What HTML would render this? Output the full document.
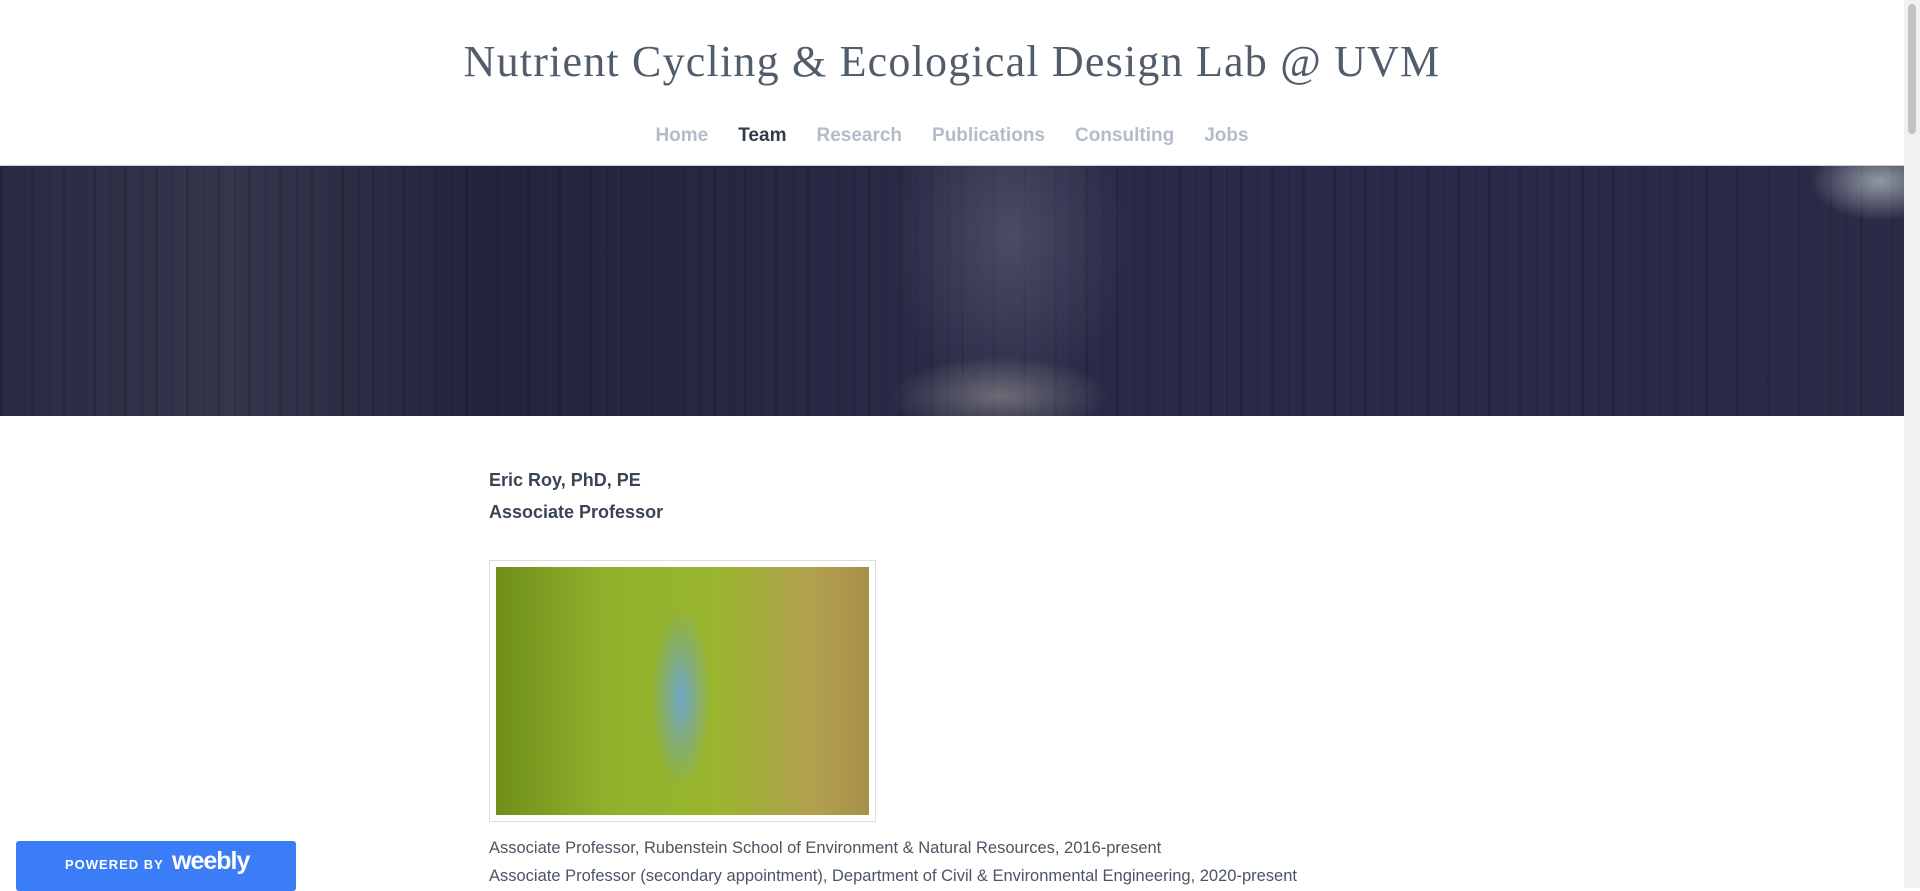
<!DOCTYPE html>
<html><head><meta charset="utf-8"><style>
html,body{margin:0;padding:0;width:1920px;height:888px;overflow:hidden;background:#fff;font-family:"Liberation Sans",sans-serif}
.title{position:absolute;left:0;width:1904px;top:36px;text-align:center;font-family:"Liberation Serif",serif;font-size:44px;color:#525d6b;letter-spacing:1.2px;white-space:nowrap}
.nav{position:absolute;left:0;width:1904px;top:125px;text-align:center;font-size:19px;font-weight:bold;color:#b3bccb;white-space:nowrap}
.nav span{margin:0 15px}
.nav .a{color:#323d4c}
.banner{position:absolute;left:0;top:165px;width:1904px;height:250px;
background:
radial-gradient(ellipse 110px 40px at 1000px 230px,rgba(170,170,160,.5),transparent),
radial-gradient(ellipse 120px 180px at 1010px 70px,rgba(110,108,130,.5),transparent),
radial-gradient(ellipse 70px 40px at 1880px 15px,rgba(190,200,200,.7),transparent),
repeating-linear-gradient(90deg,rgba(0,0,0,.12) 0 3px,transparent 3px 17px,rgba(0,0,0,.08) 17px 19px,transparent 19px 31px),
linear-gradient(90deg,#2a2a42 0%,#35354c 12%,#24243c 25%,#2a2a47 50%,#29294a 75%,#2b2b47 100%);border-top:1px solid #ccc}
.scroll{position:absolute;left:1904px;top:0;width:16px;height:888px;background:#f1f1f1}
.scroll div{position:absolute;left:4px;top:4px;width:8px;height:130px;background:#c1c1c1;border-radius:4px}
.h{position:absolute;left:489px;font-size:18px;font-weight:bold;color:#3a4453}
.frame{position:absolute;left:489px;top:560px;width:385px;height:260px;border:1px solid #ddd}
.photo{position:absolute;left:6px;top:6px;width:373px;height:248px;background:
radial-gradient(ellipse 30px 90px at 185px 130px,#6fa6c9,transparent),
linear-gradient(90deg,#6f8f1a,#8fb12a 30%,#9ab52e 60%,#b2a050 85%,#a89048)}
.t{position:absolute;left:489px;font-size:16.5px;color:#4b5563;white-space:nowrap}
.badge{position:absolute;left:16px;top:841px;width:280px;height:50px;background:#3b7cf7;border-radius:3px;color:#fff}
.badge .p{position:absolute;left:49px;top:16px;font-size:13px;font-weight:bold;letter-spacing:1px}
.badge .w{position:absolute;left:156px;top:6px;font-size:25px;font-weight:bold;letter-spacing:-1px}
</style></head><body>
<div class="title">Nutrient Cycling &amp; Ecological Design Lab @ UVM</div>
<div class="nav"><span>Home</span><span class="a">Team</span><span>Research</span><span>Publications</span><span>Consulting</span><span>Jobs</span></div>
<div class="banner"></div>
<div class="h" style="top:470px">Eric Roy, PhD, PE</div>
<div class="h" style="top:502px">Associate Professor</div>
<div class="frame"><div class="photo"></div></div>
<div class="t" style="top:839px">Associate Professor, Rubenstein School of Environment &amp; Natural Resources, 2016-present</div>
<div class="t" style="top:867px">Associate Professor (secondary appointment), Department of Civil &amp; Environmental Engineering, 2020-present</div>
<div class="badge"><span class="p">POWERED BY</span><span class="w">weebly</span></div>
<div class="scroll"><div></div></div>
</body></html>
